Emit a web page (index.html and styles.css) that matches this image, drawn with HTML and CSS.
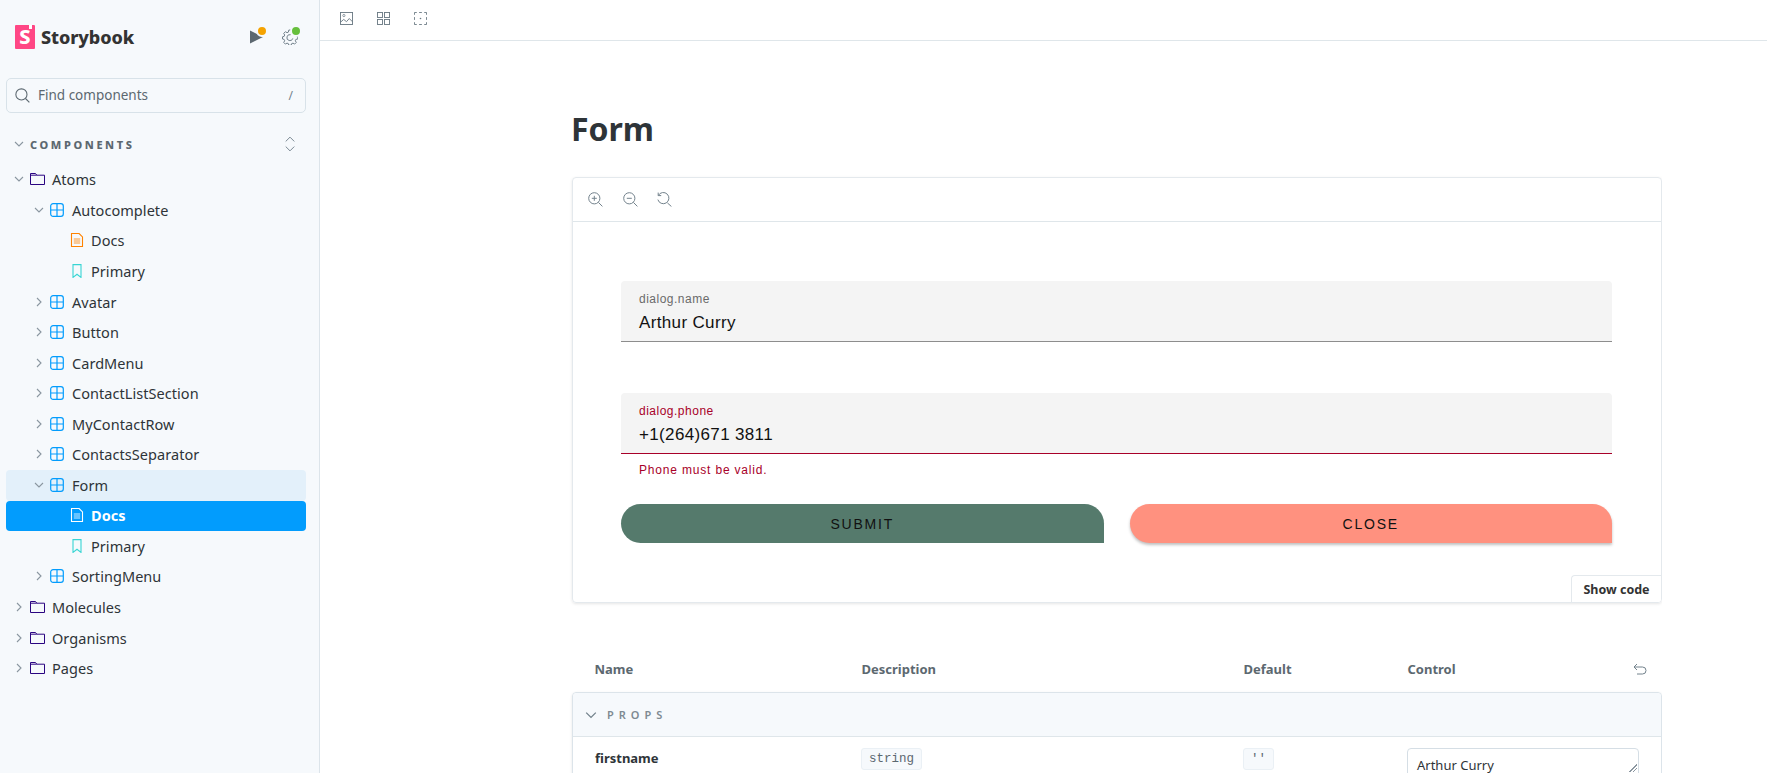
FILE: index.html
```html
<!DOCTYPE html>
<html lang="en">
<head>
<meta charset="utf-8">
<title>Form - Docs</title>
<link rel="stylesheet" href="styles.css">
</head>
<body>
<svg class="defs" width="0" height="0" aria-hidden="true">
  <defs>
    <symbol id="i-right" viewBox="0 0 10 10"><path d="M3 1l4 4-4 4" fill="none" stroke="currentColor" stroke-width="1.1"/></symbol>
    <symbol id="i-down" viewBox="0 0 10 10"><path d="M1 3l4 4 4-4" fill="none" stroke="currentColor" stroke-width="1.1"/></symbol>
    <symbol id="i-folder" viewBox="0 0 15 14"><path d="M.5 1.500h5l1.300 1.700h7.700v9.300H.5z" fill="none" stroke="currentColor" stroke-width="1"/><path d="M.5 3.200h6.300" fill="none" stroke="currentColor" stroke-width="1"/></symbol>
    <symbol id="i-comp" viewBox="0 0 14 14"><rect x=".7" y=".7" width="12.6" height="12.6" rx="2.4" fill="none" stroke="currentColor" stroke-width="1.2"/><path d="M7 1v12M1 7h12" stroke="currentColor" stroke-width="1.2"/></symbol>
    <symbol id="i-doc" viewBox="0 0 14 14"><path d="M1.500.5h7.600l3.400 3.400v9.600h-11z" fill="none" stroke="currentColor" stroke-width="1.100"/><path d="M3.800 6h6.400M3.800 8h6.400M3.800 10h6.400" stroke="currentColor" stroke-width=".8"/></symbol>
    <symbol id="i-story" viewBox="0 0 14 14"><path d="M3 .6h8v12.800l-4-3.200-4 3.200z" fill="none" stroke="currentColor" stroke-width="1.100"/></symbol>
  </defs>
</svg>

<aside class="sidebar">
  <header class="brand">
    <div class="logo-wrap">
      <span class="logo"><span class="logo-s">S</span><span class="logo-notch"></span></span>
      <span class="brand-name">Storybook</span>
    </div>
    <div class="brand-actions">
      <span class="status-icon">
        <svg class="i14" viewBox="0 0 14 14"><path d="M1 .4L14 7 1 13.600z" fill="#5C6870"/></svg>
        <span class="dot dot-orange"></span>
      </span>
      <span class="status-icon">
        <svg class="i16" viewBox="0 0 16 16"><path d="M6.800 1h2.400l.4 1.900 1.400.6 1.600-1 1.700 1.700-1 1.600.6 1.400 1.900.4v2.400l-1.900.4-.6 1.400 1 1.600-1.700 1.700-1.600-1-1.400.6-.4 1.600H6.800l-.4-1.600-1.400-.6-1.600 1-1.700-1.700 1-1.600-.6-1.400-1.600-.4V7.800l1.600-.4.6-1.400-1-1.600 1.700-1.700 1.600 1 1.400-.6z" fill="none" stroke="#73828C" stroke-width="1"/><path d="M10.800 9.400a3 3 0 1 1-2.200-3.700" fill="none" stroke="#73828C"/></svg>
        <span class="dot dot-green"></span>
      </span>
    </div>
  </header>

  <div class="search">
    <svg class="search-icon" viewBox="0 0 14 14"><circle cx="6" cy="6" r="5.200" fill="none" stroke="#5C6870" stroke-width="1"/><path d="M9.800 9.800l3.600 3.600" stroke="#5C6870" stroke-width="1"/></svg>
    <span class="search-text">Find components</span>
    <span class="search-key">/</span>
  </div>

  <div class="section-head">
    <svg class="chev" viewBox="0 0 10 10"><use href="#i-down"/></svg>
    <span class="section-title">COMPONENTS</span>
    <svg class="expand" viewBox="0 0 14 18"><path d="M2 6l5-5 5 5M2 12l5 5 5-5" fill="none" stroke="#73828C" stroke-width="1.100"/></svg>
  </div>

  <nav class="tree">
    <a class="row d0"><svg class="chev" viewBox="0 0 10 10"><use href="#i-down"/></svg><svg class="ic ic-folder"><use href="#i-folder"/></svg>Atoms</a>
    <a class="row d1"><svg class="chev" viewBox="0 0 10 10"><use href="#i-down"/></svg><svg class="ic ic-comp"><use href="#i-comp"/></svg>Autocomplete</a>
    <a class="row d2"><span class="chev"></span><svg class="ic ic-doc"><use href="#i-doc"/></svg>Docs</a>
    <a class="row d2"><span class="chev"></span><svg class="ic ic-story"><use href="#i-story"/></svg>Primary</a>
    <a class="row d1"><svg class="chev" viewBox="0 0 10 10"><use href="#i-right"/></svg><svg class="ic ic-comp"><use href="#i-comp"/></svg>Avatar</a>
    <a class="row d1"><svg class="chev" viewBox="0 0 10 10"><use href="#i-right"/></svg><svg class="ic ic-comp"><use href="#i-comp"/></svg>Button</a>
    <a class="row d1"><svg class="chev" viewBox="0 0 10 10"><use href="#i-right"/></svg><svg class="ic ic-comp"><use href="#i-comp"/></svg>CardMenu</a>
    <a class="row d1"><svg class="chev" viewBox="0 0 10 10"><use href="#i-right"/></svg><svg class="ic ic-comp"><use href="#i-comp"/></svg>ContactListSection</a>
    <a class="row d1"><svg class="chev" viewBox="0 0 10 10"><use href="#i-right"/></svg><svg class="ic ic-comp"><use href="#i-comp"/></svg>MyContactRow</a>
    <a class="row d1"><svg class="chev" viewBox="0 0 10 10"><use href="#i-right"/></svg><svg class="ic ic-comp"><use href="#i-comp"/></svg>ContactsSeparator</a>
    <a class="row d1 open"><svg class="chev" viewBox="0 0 10 10"><use href="#i-down"/></svg><svg class="ic ic-comp"><use href="#i-comp"/></svg>Form</a>
    <a class="row d2 selected"><span class="chev"></span><svg class="ic"><use href="#i-doc"/></svg>Docs</a>
    <a class="row d2"><span class="chev"></span><svg class="ic ic-story"><use href="#i-story"/></svg>Primary</a>
    <a class="row d1"><svg class="chev" viewBox="0 0 10 10"><use href="#i-right"/></svg><svg class="ic ic-comp"><use href="#i-comp"/></svg>SortingMenu</a>
    <a class="row d0"><svg class="chev" viewBox="0 0 10 10"><use href="#i-right"/></svg><svg class="ic ic-folder"><use href="#i-folder"/></svg>Molecules</a>
    <a class="row d0"><svg class="chev" viewBox="0 0 10 10"><use href="#i-right"/></svg><svg class="ic ic-folder"><use href="#i-folder"/></svg>Organisms</a>
    <a class="row d0"><svg class="chev" viewBox="0 0 10 10"><use href="#i-right"/></svg><svg class="ic ic-folder"><use href="#i-folder"/></svg>Pages</a>
  </nav>
</aside>

<main class="main">
  <div class="topbar">
    <svg class="tool" viewBox="0 0 14 14"><rect x=".5" y=".5" width="13" height="13" fill="none" stroke="#6B7A84"/><path d="M.5 11l3.500-3 3 2.400 3-3.400 3.500 3.600" fill="none" stroke="#6B7A84"/><circle cx="4.200" cy="3.800" r="1.200" fill="none" stroke="#6B7A84" stroke-width=".8"/></svg>
    <svg class="tool" viewBox="0 0 14 14"><g fill="none" stroke="#6B7A84"><rect x=".5" y=".5" width="5.400" height="5.400"/><rect x="8.100" y=".5" width="5.400" height="5.400"/><rect x=".5" y="8.100" width="5.400" height="5.400"/><rect x="8.100" y="8.100" width="5.400" height="5.400"/></g></svg>
    <svg class="tool" viewBox="0 0 14 14"><g fill="none" stroke="#6B7A84"><path d="M.5 3V.5H3M5.500.5h3M11 .5h2.500V3M13.500 5.500v3M13.500 11v2.500H11M8.500 13.500h-3M3 13.500H.5V11M.5 8.500v-3"/></g><circle cx="7" cy="7" r=".9" fill="#6B7A84"/></svg>
  </div>

  <div class="content">
    <h1 class="title">Form</h1>

    <section class="preview">
      <div class="preview-bar">
        <svg class="zoomi" viewBox="0 0 15 15"><g fill="none" stroke="#73828C" stroke-width="1"><circle cx="6.300" cy="6.300" r="5.600"/><path d="M10.400 10.400l4 4M3.800 6.300h5M6.300 3.800v5"/></g></svg>
        <svg class="zoomi" viewBox="0 0 15 15"><g fill="none" stroke="#73828C" stroke-width="1"><circle cx="6.300" cy="6.300" r="5.600"/><path d="M10.400 10.400l4 4M3.800 6.300h5"/></g></svg>
        <svg class="zoomi" viewBox="0 0 15 15"><g fill="none" stroke="#73828C" stroke-width="1"><path d="M1.400 3.400A5.600 5.600 0 1 1 .9 7.600"/><path d="M1.200 .6v3h3M10.400 10.900l4 3.600"/></g></svg>
      </div>
      <div class="preview-body">
        <div class="field">
          <span class="field-label">dialog.name</span>
          <span class="field-value">Arthur Curry</span>
        </div>
        <div class="field field-error">
          <span class="field-label">dialog.phone</span>
          <span class="field-value">+1(264)671 3811</span>
        </div>
        <div class="helper">Phone must be valid.</div>
        <div class="actions">
          <button class="btn btn-submit">SUBMIT</button>
          <button class="btn btn-close">CLOSE</button>
        </div>
      </div>
      <button class="show-code">Show code</button>
    </section>

    <div class="args-head">
      <span>Name</span><span>Description</span><span>Default</span>
      <span class="control-head">Control
        <svg class="undo" viewBox="0 0 14 12"><path d="M4 1L1 4l3 3M1 4h8.500a3.500 3.500 0 0 1 0 7H4" fill="none" stroke="#73828C" stroke-width="1"/></svg>
      </span>
    </div>

    <section class="args">
      <div class="args-group">
        <svg class="group-chev" viewBox="0 0 10 10"><use href="#i-down"/></svg>
        <span>PROPS</span>
      </div>
      <div class="args-row">
        <span class="prop-name">firstname</span>
        <span><code class="chip">string</code></span>
        <span><code class="chip">''</code></span>
        <span class="textarea">Arthur Curry</span>
      </div>
    </section>
  </div>
</main>
</body>
</html>
```
FILE: styles.css
```css
* { box-sizing: border-box; }
html, body { height: 100%; }
body {
  margin: 0;
  height: 773px;
  overflow: hidden;
  display: flex;
  background: #fff;
  color: #2E3438;
  font-family: "Noto Sans", "Open Sans", sans-serif;
  font-size: 14px;
}
.defs { position: absolute; }

/* Sidebar */
.sidebar {
  width: 320px;
  flex: none;
  background: #F6F9FC;
  border-right: 1px solid #DCE4EA;
  padding: 0 13px 0 6px;
  display: flex;
  flex-direction: column;
}
.brand {
  height: 78px;
  padding: 0 8px 4px 9px;
  display: flex;
  align-items: center;
  justify-content: space-between;
}
.logo-wrap { display: flex; align-items: center; gap: 6px; }
.logo {
  position: relative;
  width: 20px;
  height: 24px;
  background: #FF4785;
  border-radius: 1px;
  display: flex;
  align-items: center;
  justify-content: center;
}
.logo-s {
  color: #fff;
  font-weight: 800;
  font-size: 20px;
  line-height: 1;
}
.logo-notch {
  position: absolute;
  top: 0;
  right: 3px;
  width: 3px;
  height: 4px;
  background: #fff;
}
.brand-name {
  font-weight: 800;
  font-size: 18px;
  letter-spacing: -.1px;
  color: #333;
}
.brand-actions { display: flex; align-items: center; gap: 17px; }
.status-icon { position: relative; display: flex; width: 17px; height: 17px; align-items: center; justify-content: center; }
.i14 { width: 14px; height: 14px; }
.i16 { width: 16px; height: 16px; }
.dot {
  position: absolute;
  top: -4px;
  right: -4px;
  width: 12px;
  height: 12px;
  border-radius: 50%;
  border: 2px solid #F6F9FC;
}
.dot-orange { background: #F5A300; }
.dot-green { background: #66BF3C; }

.search {
  height: 35px;
  border: 1px solid #D8E2E9;
  border-radius: 5px;
  background: #F6F9FC;
  display: flex;
  align-items: center;
  padding: 0 12px 0 8px;
  gap: 8px;
  color: #5C6870;
  font-size: 13.5px;
}
.search-text { flex: 1; line-height: 16px; margin-top: -1px; }
.search-icon { flex: none; width: 15px; height: 15px; }
.search-key { font-size: 12px; color: #73828C; }

.section-head {
  margin-top: 16px;
  height: 30px;
  padding-left: 8px;
  display: flex;
  align-items: center;
}
.section-title {
  flex: 1;
  margin-left: 6px;
  font-size: 11px;
  font-weight: 800;
  letter-spacing: 2.6px;
  color: #5C6870;
}
.expand { width: 12px; height: 16px; margin-right: 10px; }
.chev { width: 10px; height: 10px; flex: none; color: #8A96A0; }

.tree { margin-top: 5.6px; display: flex; flex-direction: column; }
.row {
  height: 30.56px;
  flex: none;
  padding-bottom: 1px;
  display: flex;
  align-items: center;
  border-radius: 4px;
  font-size: 14.5px;
  letter-spacing: .05px;
  color: #2E3438;
}
.d0 { padding-left: 8px; }
.d1 { padding-left: 28px; }
.d2 { padding-left: 48px; }
.ic { width: 14px; height: 14px; margin: 0 8px 0 6px; flex: none; }
.d0 .ic { width: 15px; margin-right: 7px; }
.d2 .ic { margin-right: 7px; }
.ic-folder { color: #2A0481; }
.ic-comp { color: #029CFD; }
.ic-doc { color: #FF8300; }
.ic-story { color: #37D5D3; }
.open { background: #E3F0FA; }
.selected { background: #029CFD; color: #fff; font-weight: 700; }

/* Main */
.main { flex: 1; min-width: 0; display: flex; flex-direction: column; }
.topbar {
  height: 41px;
  flex: none;
  border-bottom: 1px solid #DFE6EA;
  padding-left: 20px;
  display: flex;
  align-items: center;
  gap: 24px;
}
.tool { width: 13px; height: 13px; margin-top: -3px; }
.content {
  padding-left: 252px;
  width: 1342px;
  flex: 1;
  overflow: hidden;
}
.title {
  margin: 0 0 0 -1px;
  padding-top: 66px;
  height: 136px;
  font-size: 32px;
  line-height: 44px;
  font-weight: 700;
}
.preview {
  position: relative;
  height: 426px;
  border: 1px solid #E4E9ED;
  border-radius: 4px;
  box-shadow: 0 1px 3px rgba(0, 0, 0, .1);
  overflow: hidden;
}
.preview-bar {
  height: 44px;
  border-bottom: 1px solid #DFE6EA;
  padding-left: 15px;
  display: flex;
  align-items: center;
  gap: 19.5px;
}
.zoomi { width: 15px; height: 15px; }
.preview-body {
  padding: 59px 49px 0 48px;
  font-family: "Liberation Sans", Arial, sans-serif;
}
.field {
  height: 61px;
  background: #F4F4F4;
  border-bottom: 1px solid #8D8D8D;
  border-radius: 4px 4px 0 0;
  padding: 11px 18px 0;
  display: flex;
  flex-direction: column;
}
.field + .field { margin-top: 51px; }
.field-label { font-size: 12px; line-height: 14px; letter-spacing: .5px; color: #6A6A6A; }
.field-value { margin-top: 7px; font-size: 17px; line-height: 20px; color: #111; letter-spacing: .35px; }
.field-error { border-bottom-color: #A80029; }
.field-error .field-label { color: #A80029; }
.helper {
  margin-top: 8px;
  padding-left: 18px;
  font-size: 12px;
  line-height: 16px;
  letter-spacing: .82px;
  color: #A80029;
}
.actions { margin-top: 26px; display: flex; gap: 26px; }
.btn {
  flex: 1;
  height: 39px;
  border: 0;
  border-radius: 20px 20px 0 20px;
  font-family: "Liberation Sans", Arial, sans-serif;
  font-size: 14px;
  letter-spacing: 1.8px;
  color: #111;
}
.btn-submit { background: #557A6C; }
.btn-close { background: #FF917F; box-shadow: 0 2px 3px rgba(0, 0, 0, .25); }
.show-code {
  position: absolute;
  right: 0;
  bottom: 0;
  width: 90px;
  height: 27px;
  padding: 0;
  background: #fff;
  border: 1px solid #E4E9ED;
  border-width: 1px 0 0 1px;
  border-radius: 4px 0 0 0;
  font-family: "Noto Sans", sans-serif;
  font-size: 12.5px;
  font-weight: 700;
  color: #333;
}

.args-head {
  margin-top: 45px;
  height: 44px;
  padding: 0 0 2px 22.5px;
  display: grid;
  grid-template-columns: 267px 382px 164px 1fr;
  align-items: center;
  font-size: 13px;
  font-weight: 700;
  color: #5C6870;
}
.control-head { display: flex; justify-content: space-between; align-items: center; padding-right: 15px; }
.undo { width: 14px; height: 12px; }
.args {
  border: 1px solid #DCE4EA;
  border-radius: 4px;
  box-shadow: 0 1px 3px rgba(0, 0, 0, .1);
}
.args-group {
  height: 44px;
  background: #F6F9FC;
  border-bottom: 1px solid #DFE6EA;
  border-radius: 4px 4px 0 0;
  padding-left: 12px;
  display: flex;
  align-items: center;
  gap: 10px;
  font-size: 11px;
  font-weight: 600;
  letter-spacing: 5px;
  color: #7E8A92;
}
.group-chev { width: 12px; height: 12px; color: #73828C; }
.args-row {
  padding: 11px 0 30px 22px;
  display: grid;
  grid-template-columns: 266px 382px 164px 232px;
  font-size: 13px;
}
.prop-name { font-weight: 700; padding-top: 1px; }
.chip {
  display: inline-block;
  padding: 0 7px;
  height: 22px;
  line-height: 20px;
  background: #F6F9FC;
  border: 1px solid #EAF0F5;
  border-radius: 3px;
  font-family: "Liberation Mono", monospace;
  font-size: 12.5px;
  color: #5C6870;
}
.textarea {
  position: relative;
  height: 40px;
  border: 1px solid #D5DEE5;
  border-radius: 4px;
  padding: 7px 9px;
  font-size: 13px;
  line-height: 18px;
  color: #2E3438;
}
.textarea::after {
  content: "";
  position: absolute;
  right: 1px;
  top: 15px;
  width: 8px;
  height: 8px;
  background: linear-gradient(135deg, transparent 50%, #8A96A0 50%, #8A96A0 58%, transparent 58%, transparent 72%, #8A96A0 72%, #8A96A0 80%, transparent 80%);
}
```
